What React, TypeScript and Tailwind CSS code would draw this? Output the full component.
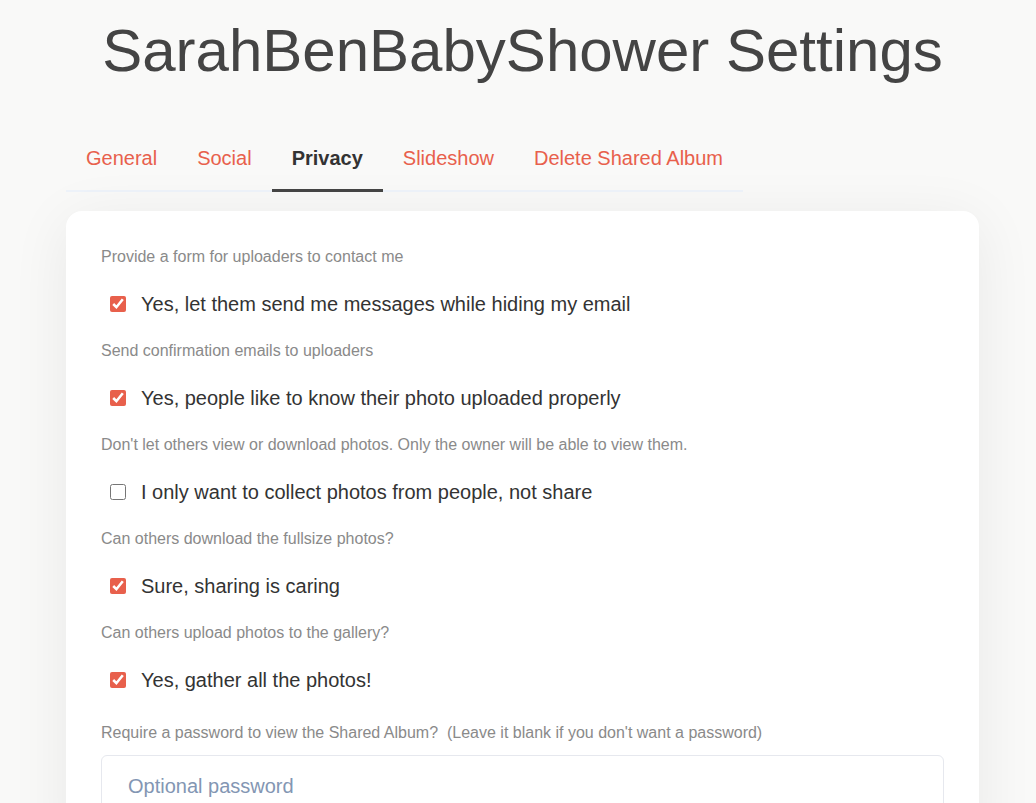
const tabs = ["General", "Social", "Privacy", "Slideshow", "Delete Shared Album"];

const options = [
  {
    label: "Provide a form for uploaders to contact me",
    text: "Yes, let them send me messages while hiding my email",
    checked: true,
  },
  {
    label: "Send confirmation emails to uploaders",
    text: "Yes, people like to know their photo uploaded properly",
    checked: true,
  },
  {
    label: "Don't let others view or download photos. Only the owner will be able to view them.",
    text: "I only want to collect photos from people, not share",
    checked: false,
  },
  {
    label: "Can others download the fullsize photos?",
    text: "Sure, sharing is caring",
    checked: true,
  },
  {
    label: "Can others upload photos to the gallery?",
    text: "Yes, gather all the photos!",
    checked: true,
  },
];

export default function App() {
  return (
    <div className="min-h-screen bg-[#f9f9f8] font-['Liberation_Sans',Arial,sans-serif] pb-10">
      <div className="w-[913px] ml-[66px]">
        {/* Title */}
        <h1 className="pt-[15px] text-center text-[60px] leading-[72px] text-[#444]">
          SarahBenBabyShower Settings
        </h1>

        {/* Tabs */}
        <div className="mt-[43px] flex w-max border-b-2 border-[#eef3fa]">
          {tabs.map((tab) => (
            <button
              key={tab}
              className={`-mb-[2px] px-[20px] pt-[14px] pb-[17px] text-[20px] leading-[28px] ${
                tab === "Privacy"
                  ? "border-b-[3px] border-[#444] font-bold text-[#333]"
                  : "border-b-[3px] border-transparent text-[#e8604c]"
              }`}
            >
              {tab}
            </button>
          ))}
        </div>

        {/* Settings card */}
        <div className="mt-[19px] rounded-[16px] bg-white px-[35px] pt-[34px] pb-10 shadow-[0_10px_60px_rgba(0,0,0,0.07)]">
          {options.map((opt) => (
            <div key={opt.text}>
              <p className="mb-[21px] text-[16px] leading-6 text-[#8a8a8a]">{opt.label}</p>
              <label className="mb-[21px] flex items-center text-[20px] leading-[28px] text-[#333]">
                <input
                  type="checkbox"
                  defaultChecked={opt.checked}
                  className="ml-[9px] mr-[15px] h-4 w-4 accent-[#e8604c]"
                />
                {opt.text}
              </label>
            </div>
          ))}

          <p className="mt-[27px] text-[16px] leading-6 text-[#8a8a8a] whitespace-pre">
            Require a password to view the Shared Album?  (Leave it blank if you don't want a password)
          </p>
          <input
            type="text"
            placeholder="Optional password"
            className="mt-[10px] h-[62px] w-full rounded-[6px] border border-[#e6e8ee] px-[26px] text-[20px] text-[#333] outline-none placeholder:text-[#8396b3]"
          />
        </div>
      </div>
    </div>
  );
}
